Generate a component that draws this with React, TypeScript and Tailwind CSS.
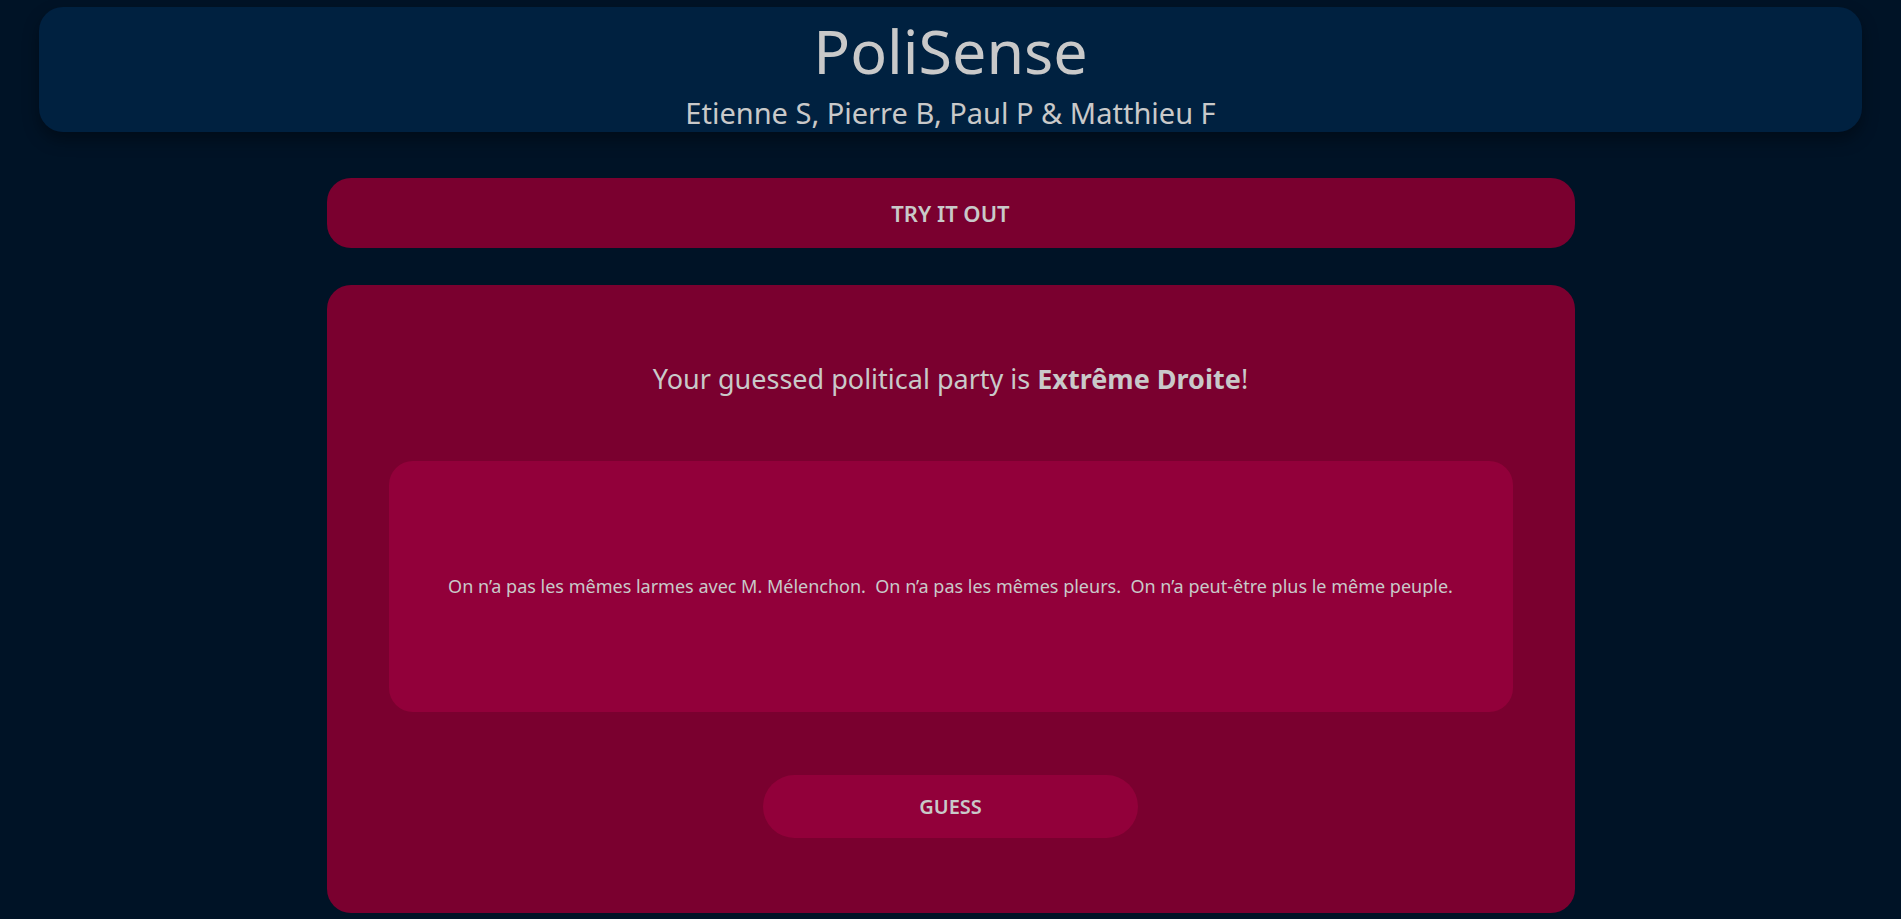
export default function App() {

const quote =
"On n’a pas les mêmes larmes avec M. Mélenchon.  On n’a pas les mêmes pleurs.  On n’a peut-être plus le même peuple."


return (

<div
className="min-h-screen bg-[#001326] pt-[7px] text-[#c9c9c9]"
style={{ fontFamily: '"Noto Sans", "Open Sans", sans-serif' }}
>

{/* HEADER */}

<header className="mx-[39px] h-[125px] rounded-3xl bg-[#002140] pt-[8px] flex flex-col items-center shadow-[0_8px_16px_rgba(0,0,0,0.35)]">

<h1 className="text-[61px] leading-[72px]">
PoliSense
</h1>

<p className="mt-2 text-[29px] leading-[36px]">
Etienne S, Pierre B, Paul P &amp; Matthieu F
</p>

</header>



{/* TRY IT OUT */}

<button className="mt-[46px] mx-auto w-[1248px] h-[70px] rounded-3xl bg-[#7a002f] flex items-center justify-center text-[22px] font-semibold">
TRY IT OUT
</button>



{/* RESULT CARD */}

<div className="mt-[37px] mx-auto w-[1248px] rounded-3xl bg-[#7a002f] px-[62px] pt-[76px] pb-[75px] flex flex-col items-center">

<p className="text-[27px] leading-[36px]">
Your guessed political party is <b className="font-bold">Extrême Droite</b>!
</p>

<div className="mt-[64px] w-full h-[251px] rounded-3xl bg-[#92003a] flex items-center justify-center">
<p className="text-[18px] whitespace-pre-wrap">
{quote}
</p>
</div>

<button className="mt-[63px] w-[375px] h-[63px] rounded-full bg-[#92003a] text-[20px] font-semibold">
GUESS
</button>

</div>

</div>

)

}
